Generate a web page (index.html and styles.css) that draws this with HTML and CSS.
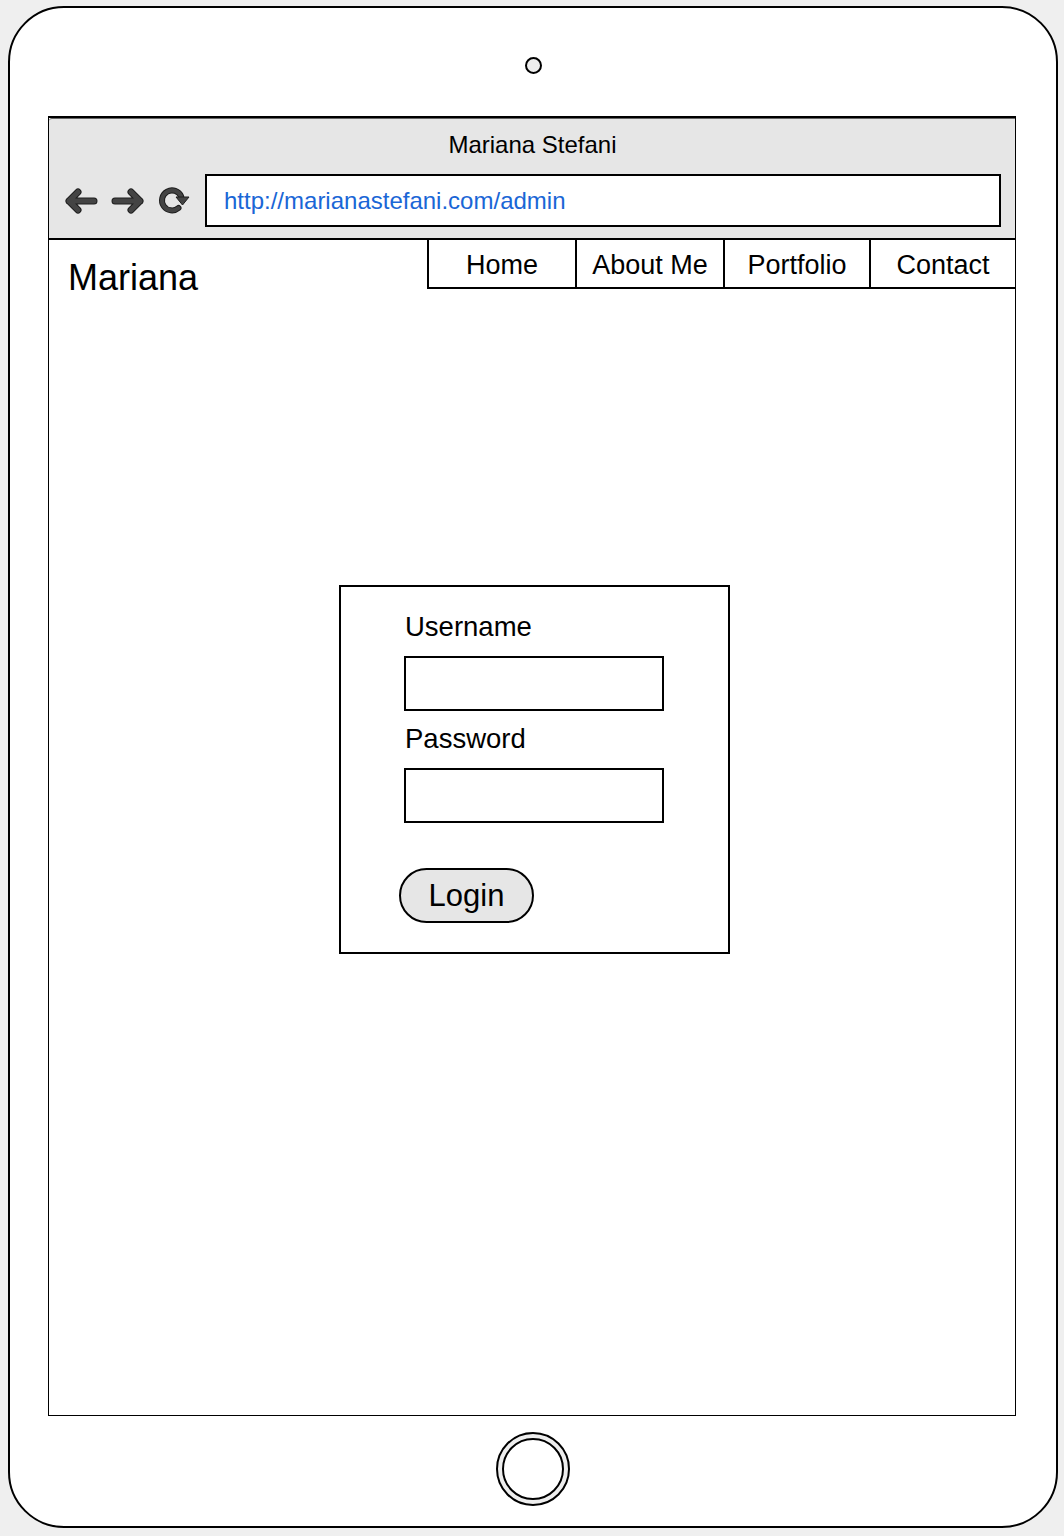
FILE: index.html
```html
<!DOCTYPE html>
<html lang="en">
<head>
<meta charset="utf-8">
<title>Mariana Stefani - Admin</title>
<link rel="stylesheet" href="styles.css">
</head>
<body>
<div class="device">
  <div class="camera"></div>
  <div class="screen">
    <div class="browser-bar">
      <div class="browser-title">Mariana Stefani</div>
      <div class="browser-row">
        <div class="browser-icons">
          <svg class="icon" width="34" height="28" viewBox="0 0 34 28" aria-hidden="true">
            <path d="M30 14H5 M14 5L5 14l9 9" fill="none" stroke="#1e1e1e" stroke-width="7" stroke-linecap="round" stroke-linejoin="round"/>
            <path d="M30 14H5 M14 5L5 14l9 9" fill="none" stroke="#444" stroke-width="5" stroke-linecap="round" stroke-linejoin="round"/>
          </svg>
          <svg class="icon" width="34" height="28" viewBox="0 0 34 28" aria-hidden="true">
            <path d="M4 14H29 M20 5L29 14l-9 9" fill="none" stroke="#1e1e1e" stroke-width="7" stroke-linecap="round" stroke-linejoin="round"/>
            <path d="M4 14H29 M20 5L29 14l-9 9" fill="none" stroke="#444" stroke-width="5" stroke-linecap="round" stroke-linejoin="round"/>
          </svg>
          <svg class="icon" width="34" height="30" viewBox="0 0 34 30" aria-hidden="true">
            <path d="M20.5 22 A10 10 0 1 1 23.2 10.5" fill="none" stroke="#1e1e1e" stroke-width="6" stroke-linecap="round"/>
            <path d="M20.5 22 A10 10 0 1 1 23.2 10.5" fill="none" stroke="#444" stroke-width="4" stroke-linecap="round"/>
            <path d="M18 11 L31 11 L24.5 19 Z" fill="#444" stroke="#1e1e1e" stroke-width="1" stroke-linejoin="round"/>
          </svg>
        </div>
        <div class="url-box">http://marianastefani.com/admin</div>
      </div>
    </div>
    <div class="site-top">
      <div class="logo">Mariana</div>
      <nav class="nav">
        <a class="nav-item">Home</a>
        <a class="nav-item">About Me</a>
        <a class="nav-item nav-item-narrow">Portfolio</a>
        <a class="nav-item nav-item-narrow">Contact</a>
      </nav>
    </div>
    <main class="site-main">
      <form class="login-box">
        <label class="field-label">Username</label>
        <div class="field-input"></div>
        <label class="field-label field-label-2">Password</label>
        <div class="field-input"></div>
        <button type="button" class="login-btn">Login</button>
      </form>
    </main>
  </div>
  <div class="home-btn"><div class="home-inner"></div></div>
</div>
</body>
</html>
```
FILE: styles.css
```css
html, body {
  margin: 0;
  padding: 0;
}
body {
  background: #efefef;
  font-family: "Liberation Sans", Arial, Helvetica, sans-serif;
  color: #000;
}
.device {
  box-sizing: border-box;
  width: 1050px;
  height: 1522px;
  margin: 6px 0 0 8px;
  background: #fff;
  border: 2px solid #000;
  border-radius: 56px;
  display: flex;
  flex-direction: column;
  align-items: center;
  padding-top: 49px;
}
.camera {
  box-sizing: border-box;
  width: 17px;
  height: 17px;
  border: 2px solid #000;
  border-radius: 50%;
  background: #eee;
}
.screen {
  box-sizing: border-box;
  align-self: flex-start;
  margin: 42px 0 0 38px;
  width: 968px;
  height: 1300px;
  border: 1px solid #000;
  border-top: 2px solid #000;
  display: flex;
  flex-direction: column;
}
.browser-bar {
  background: #e6e6e6;
  border-top: 1px solid #666;
  border-top-left-radius: 3px;
  border-bottom: 2px solid #000;
  padding: 12px 14px 11px 15px;
}
.browser-title {
  text-align: center;
  font-size: 24px;
  line-height: 28px;
  height: 28px;
}
.browser-row {
  display: flex;
  align-items: center;
  margin-top: 15px;
}
.browser-icons {
  display: flex;
  align-items: center;
  gap: 13px;
  padding-top: 1px;
}
.icon {
  display: block;
}
.url-box {
  box-sizing: border-box;
  flex: 1;
  margin-left: 13px;
  height: 53px;
  background: #fff;
  border: 2px solid #000;
  padding-left: 17px;
  font-size: 24px;
  line-height: 49px;
  color: #1a66d6;
}
.site-top {
  display: flex;
  align-items: flex-start;
  height: 49px;
}
.logo {
  padding: 20px 0 0 19px;
  font-size: 36px;
  line-height: 36px;
}
.nav {
  margin-left: auto;
  display: flex;
}
.nav-item {
  box-sizing: border-box;
  width: 148px;
  height: 49px;
  padding-top: 3px;
  border-left: 2px solid #000;
  border-bottom: 2px solid #000;
  display: flex;
  align-items: center;
  justify-content: center;
  font-size: 27px;
  color: #000;
  text-decoration: none;
}
.nav-item-narrow {
  width: 146px;
}
.site-main {
  flex: 1;
}
.login-box {
  box-sizing: border-box;
  width: 391px;
  margin: 296px 0 0 290px;
  border: 2px solid #000;
  padding: 24px 0 29px 64px;
  display: flex;
  flex-direction: column;
  align-items: flex-start;
}
.field-label {
  font-size: 27.5px;
  line-height: 32px;
}
.field-label-2 {
  margin-top: 12px;
}
.field-input {
  box-sizing: border-box;
  width: 260px;
  height: 55px;
  margin: 13px 0 0 -1px;
  border: 2px solid #000;
  background: #fff;
}
.login-btn {
  box-sizing: border-box;
  width: 135px;
  height: 55px;
  margin: 45px 0 0 -6px;
  padding: 0;
  border: 2px solid #000;
  border-radius: 28px;
  background: #e6e6e6;
  font-family: "Liberation Sans", Arial, Helvetica, sans-serif;
  font-size: 31px;
  color: #000;
}
.home-btn {
  box-sizing: border-box;
  width: 74px;
  height: 74px;
  margin-top: 16px;
  border: 2px solid #000;
  border-radius: 50%;
  background: #eee;
  display: flex;
  align-items: center;
  justify-content: center;
}
.home-inner {
  box-sizing: border-box;
  width: 62px;
  height: 62px;
  border: 2px solid #000;
  border-radius: 50%;
  background: #fff;
}
```
